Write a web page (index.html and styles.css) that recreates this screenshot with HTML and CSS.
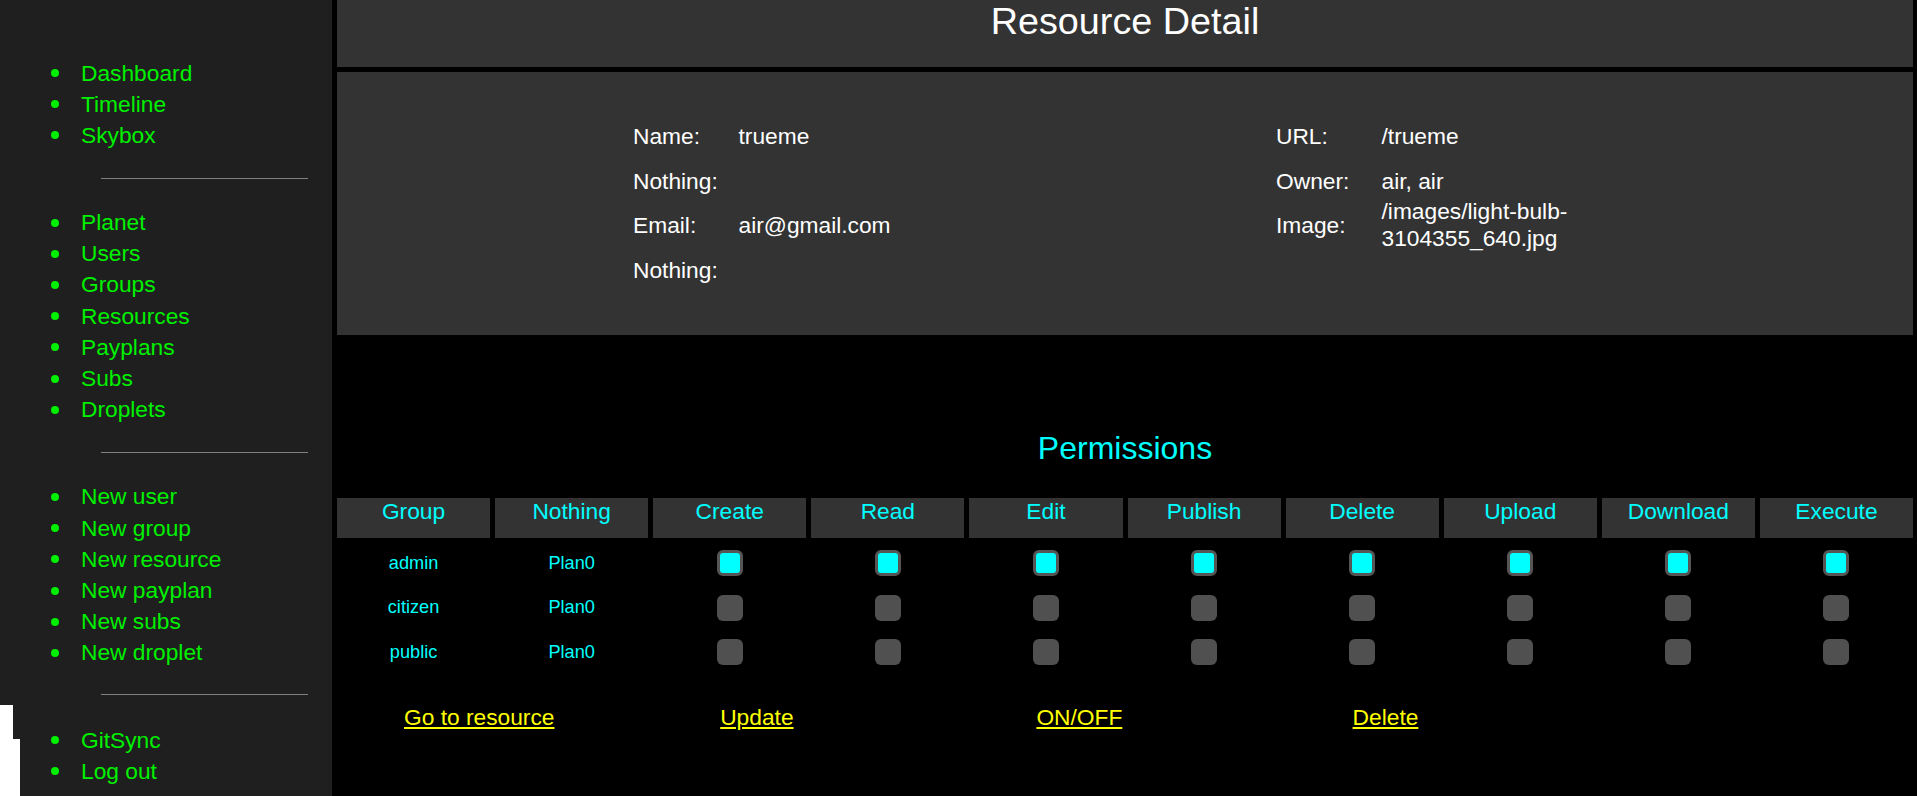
FILE: index.html
```html
<!DOCTYPE html>
<html lang="en">
<head>
<meta charset="utf-8">
<title>Resource Detail</title>
<link rel="stylesheet" href="styles.css">
</head>
<body>
<nav class="sidebar">
  <ul class="menu">
    <li><a href="#">Dashboard</a></li>
    <li><a href="#">Timeline</a></li>
    <li><a href="#">Skybox</a></li>
  </ul>
  <div class="rule"></div>
  <ul class="menu">
    <li><a href="#">Planet</a></li>
    <li><a href="#">Users</a></li>
    <li><a href="#">Groups</a></li>
    <li><a href="#">Resources</a></li>
    <li><a href="#">Payplans</a></li>
    <li><a href="#">Subs</a></li>
    <li><a href="#">Droplets</a></li>
  </ul>
  <div class="rule"></div>
  <ul class="menu">
    <li><a href="#">New user</a></li>
    <li><a href="#">New group</a></li>
    <li><a href="#">New resource</a></li>
    <li><a href="#">New payplan</a></li>
    <li><a href="#">New subs</a></li>
    <li><a href="#">New droplet</a></li>
  </ul>
  <div class="rule rule-last"></div>
  <ul class="menu">
    <li><a href="#">GitSync</a></li>
    <li><a href="#">Log out</a></li>
  </ul>
  <div class="patch patch-a"></div>
  <div class="patch patch-b"></div>
</nav>
<main class="main">
  <header class="page-header">
    <h1 class="page-title">Resource Detail</h1>
  </header>
  <section class="info">
    <dl class="info-col">
      <dt>Name:</dt><dd>trueme</dd>
      <dt>Nothing:</dt><dd></dd>
      <dt>Email:</dt><dd>air@gmail.com</dd>
      <dt>Nothing:</dt><dd></dd>
    </dl>
    <dl class="info-col">
      <dt>URL:</dt><dd>/trueme</dd>
      <dt>Owner:</dt><dd>air, air</dd>
      <dt>Image:</dt><dd class="wrap">/images/light-bulb-3104355_640.jpg</dd>
    </dl>
  </section>
  <section class="perms">
    <h2 class="perms-title">Permissions</h2>
    <div class="perm-grid">
      <div class="ph">Group</div>
      <div class="ph">Nothing</div>
      <div class="ph">Create</div>
      <div class="ph">Read</div>
      <div class="ph">Edit</div>
      <div class="ph">Publish</div>
      <div class="ph">Delete</div>
      <div class="ph">Upload</div>
      <div class="ph">Download</div>
      <div class="ph">Execute</div>

      <div class="pc">admin</div>
      <div class="pc">Plan0</div>
      <div class="pc"><input class="box" type="checkbox" checked></div>
      <div class="pc"><input class="box" type="checkbox" checked></div>
      <div class="pc"><input class="box" type="checkbox" checked></div>
      <div class="pc"><input class="box" type="checkbox" checked></div>
      <div class="pc"><input class="box" type="checkbox" checked></div>
      <div class="pc"><input class="box" type="checkbox" checked></div>
      <div class="pc"><input class="box" type="checkbox" checked></div>
      <div class="pc"><input class="box" type="checkbox" checked></div>

      <div class="pc">citizen</div>
      <div class="pc">Plan0</div>
      <div class="pc"><input class="box" type="checkbox"></div>
      <div class="pc"><input class="box" type="checkbox"></div>
      <div class="pc"><input class="box" type="checkbox"></div>
      <div class="pc"><input class="box" type="checkbox"></div>
      <div class="pc"><input class="box" type="checkbox"></div>
      <div class="pc"><input class="box" type="checkbox"></div>
      <div class="pc"><input class="box" type="checkbox"></div>
      <div class="pc"><input class="box" type="checkbox"></div>

      <div class="pc">public</div>
      <div class="pc">Plan0</div>
      <div class="pc"><input class="box" type="checkbox"></div>
      <div class="pc"><input class="box" type="checkbox"></div>
      <div class="pc"><input class="box" type="checkbox"></div>
      <div class="pc"><input class="box" type="checkbox"></div>
      <div class="pc"><input class="box" type="checkbox"></div>
      <div class="pc"><input class="box" type="checkbox"></div>
      <div class="pc"><input class="box" type="checkbox"></div>
      <div class="pc"><input class="box" type="checkbox"></div>
    </div>
    <div class="actions">
      <a class="action" href="#">Go to resource</a>
      <a class="action" href="#">Update</a>
      <a class="action" href="#">ON/OFF</a>
      <a class="action" href="#">Delete</a>
    </div>
  </section>
</main>
</body>
</html>
```
FILE: styles.css
```css
html, body {
  margin: 0;
  padding: 0;
}

body {
  background: #000;
  font-family: "Liberation Sans", Arial, sans-serif;
  font-size: 22.75px;
  display: flex;
  min-height: 100vh;
}

/* Sidebar */
.sidebar {
  position: relative;
  width: 332px;
  flex: 0 0 332px;
  min-height: 100vh;
  background: #1e1f1e;
  padding-top: 57.5px;
  box-sizing: border-box;
}

.menu {
  list-style: none;
  margin: 0;
  padding: 0 0 0 51px;
}

.menu li {
  display: flex;
  align-items: center;
  gap: 22px;
  height: 31.2px;
  line-height: 31.2px;
}

.menu li::before {
  content: "";
  width: 8px;
  height: 8px;
  border-radius: 50%;
  background: #00f000;
  flex: 0 0 8px;
}

.menu a {
  color: #00f000;
  text-decoration: none;
}

.rule {
  margin: 27px 0 28px 101px;
  width: 207px;
  border-top: 1px solid #808080;
}

.rule-last {
  margin-top: 25px;
  margin-bottom: 30px;
}

.patch {
  position: absolute;
  left: 0;
  background: #fff;
}

.patch-a {
  top: 705px;
  width: 13px;
  height: 34px;
}

.patch-b {
  top: 739px;
  width: 20px;
  bottom: 0;
}

/* Main */
.main {
  flex: 1;
  margin: 0 4px 0 5px;
  display: flex;
  flex-direction: column;
}

.page-header {
  background: #333;
  height: 67px;
}

.page-title {
  margin: 0;
  text-align: center;
  color: #fff;
  font-weight: normal;
  font-size: 37.75px;
  line-height: 43px;
}

.info {
  margin-top: 5px;
  background: #333;
  padding: 42px 0 43px 296px;
  display: grid;
  grid-template-columns: 643px 345px;
  align-items: start;
}

.info-col {
  margin: 0;
  display: grid;
  grid-template-columns: 105.5px 1fr;
  grid-auto-rows: 44.5px;
  align-items: center;
  color: #fff;
}

.info-col dt,
.info-col dd {
  margin: 0;
  line-height: 26px;
}

.info-col .wrap {
  line-height: 27px;
}

/* Permissions */
.perms {
  padding-top: 94.5px;
}

.perms-title {
  margin: 0;
  text-align: center;
  color: #00ffff;
  font-weight: normal;
  font-size: 32px;
  line-height: 37px;
}

.perm-grid {
  margin-top: 31.7px;
  display: grid;
  grid-template-columns: repeat(10, 1fr);
  grid-template-rows: 42.75px 44.5px 44.5px 44.5px;
  column-gap: 5px;
}

.ph {
  height: 40px;
  background: #333;
  color: #00ffff;
  text-align: center;
  line-height: 26px;
}

.pc {
  display: flex;
  align-items: center;
  justify-content: center;
  color: #00ffff;
  font-size: 18.2px;
}

.box {
  appearance: none;
  -webkit-appearance: none;
  margin: 0;
  width: 26px;
  height: 26px;
  border-radius: 6px;
  background: #505050;
  box-sizing: border-box;
}

.box:checked {
  background: #00ffff;
  border: 3px solid #555;
  border-radius: 6px;
}

.actions {
  margin-top: 29.8px;
  display: grid;
  grid-template-columns: repeat(5, 1fr);
  column-gap: 5px;
}

.action {
  justify-self: start;
  margin-left: 67px;
  color: #ffff00;
  text-decoration: underline;
  line-height: 26px;
}
```
